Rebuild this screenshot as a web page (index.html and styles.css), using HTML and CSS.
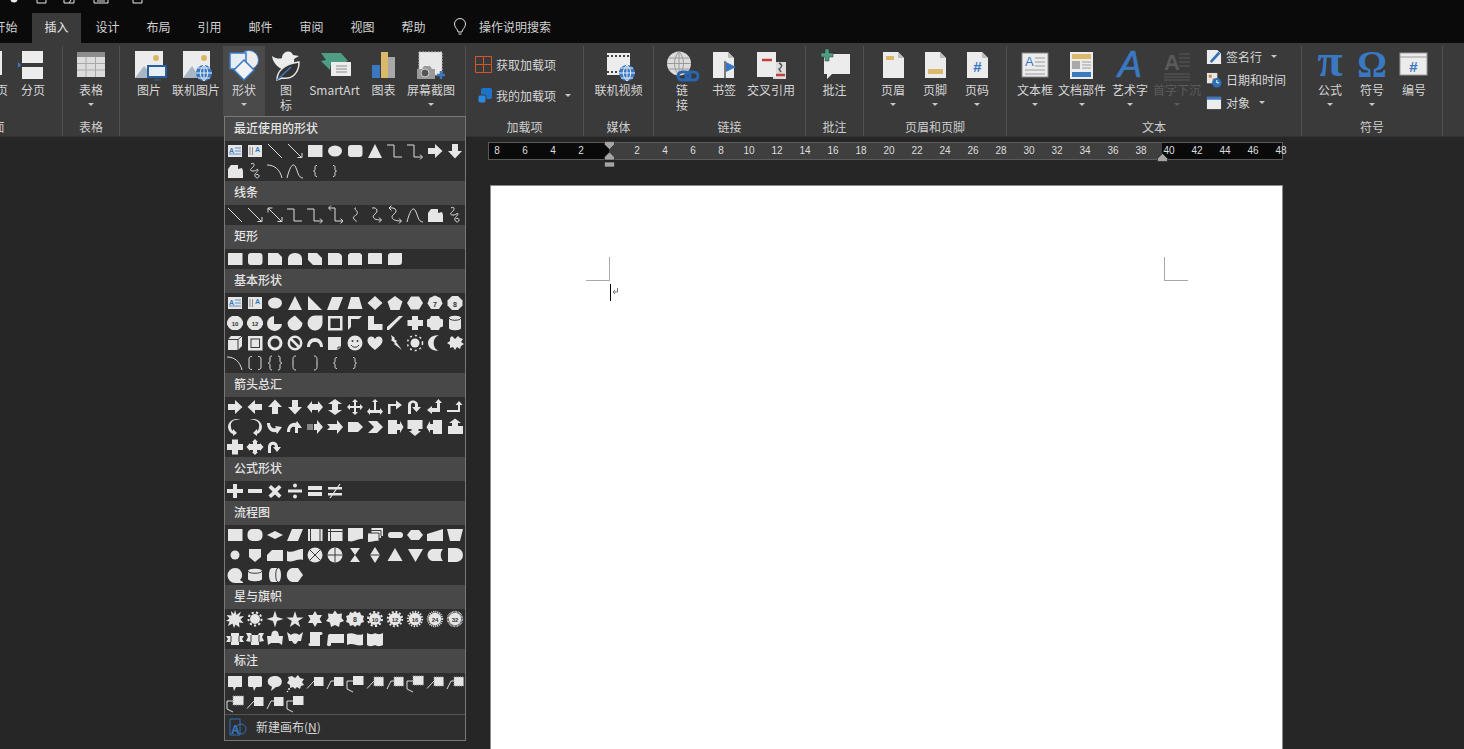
FILE: index.html
```html
<!DOCTYPE html>
<html lang="zh-CN">
<head>
<meta charset="utf-8">
<title>Word 插入</title>
<link rel="stylesheet" href="styles.css">
</head>
<body>
<svg class="defs" aria-hidden="true">
<symbol id="tb" viewBox="0 0 20 20"><rect x="3" y="4" width="14" height="12"/><path class="bl" d="M10 7h6M10 10h6M4 13h12"/></symbol>
<symbol id="tv" viewBox="0 0 20 20"><rect x="3" y="4" width="14" height="12"/><path class="gl" d="M5 6v8M7.500 6v8"/></symbol>
<symbol id="ln" viewBox="0 0 20 20"><path class="st" d="M3 3l14 14"/></symbol>
<symbol id="la" viewBox="0 0 20 20"><path class="st" d="M3 3l14 14M12.500 16.500h4.500v-4.500"/></symbol>
<symbol id="ld" viewBox="0 0 20 20"><path class="st" d="M3 3l14 14M12.500 16.500h4.500v-4.500M3 7.500V3h4.500"/></symbol>
<symbol id="rc" viewBox="0 0 20 20"><rect x="3" y="4" width="14.500" height="12"/></symbol>
<symbol id="el" viewBox="0 0 20 20"><ellipse cx="10" cy="10" rx="7" ry="5.500"/></symbol>
<symbol id="rr" viewBox="0 0 20 20"><rect x="3" y="4" width="14.500" height="12" rx="3"/></symbol>
<symbol id="tri" viewBox="0 0 20 20"><path d="M10 3l7 14H3z"/></symbol>
<symbol id="e1" viewBox="0 0 20 20"><path class="st" d="M2 4h7v12h8"/></symbol>
<symbol id="e2" viewBox="0 0 20 20"><path class="st" d="M2 4h7v12h8M15 13.500l2.500 2.500-2.500 2.500"/></symbol>
<symbol id="e3" viewBox="0 0 20 20"><path class="st" d="M4 3h6v13h8M15.500 13.500l2.500 2.500-2.500 2.500M6 .5L3.500 3 6 5.500"/></symbol>
<symbol id="ra" viewBox="0 0 20 20"><path d="M3 7h7V3l7.500 7-7.500 7v-4H3z"/></symbol>
<symbol id="ka" viewBox="0 0 20 20"><path d="M17 7h-7V3l-7.500 7 7.500 7v-4h7z"/></symbol>
<symbol id="ua" viewBox="0 0 20 20"><path d="M7 17v-7H3l7-7.500 7 7.500h-4v7z"/></symbol>
<symbol id="da" viewBox="0 0 20 20"><path d="M7 3v7H3l7 7.500L17 10h-4V3z"/></symbol>
<symbol id="ff" viewBox="0 0 20 20"><path d="M3 17V8l3-4h7v4l4-1 1 3v7z"/></symbol>
<symbol id="sc" viewBox="0 0 20 20"><path class="st" d="M6 3c3-2 4 1 2 3S4 9 7 10s6-3 6-1-4 3-3 6 4 2 4 0-3-2-3-1"/></symbol>
<symbol id="cu" viewBox="0 0 20 20"><path class="st" d="M2 4c8 0 13 5 15 13"/></symbol>
<symbol id="cs" viewBox="0 0 20 20"><path class="st" d="M2 17C5 5 8 2 10 5c3 5 3 12 8 12"/></symbol>
<symbol id="lb" viewBox="0 0 20 20"><path class="st" d="M12 4.500c-2 0-2 1-2 2v2c0 1-1 1.500-1.500 1.500.5 0 1.500.5 1.500 1.500v2c0 1 0 2 2 2"/></symbol>
<symbol id="rb" viewBox="0 0 20 20"><path class="st" d="M8 4.500c2 0 2 1 2 2v2c0 1 1 1.500 1.500 1.500-.5 0-1.500.5-1.500 1.500v2c0 1 0 2-2 2"/></symbol>
<symbol id="c1" viewBox="0 0 20 20"><path class="st" d="M11 3c-4 0 3 3 1 6s-5 2-3 5 3 2 3 2"/></symbol>
<symbol id="c2" viewBox="0 0 20 20"><path class="st" d="M7 3c6-1 6 4 3 6s-3 6 6 6M14 12.500l2.500 2.500-2.500 2.500"/></symbol>
<symbol id="c3" viewBox="0 0 20 20"><path class="st" d="M4 3c7-1 9 3 5 6s-2 7 7 7M14 13.500l2.500 2.500-2.500 2.500M6.500.5L4 3l2.500 2.500"/></symbol>
<symbol id="s1" viewBox="0 0 20 20"><path d="M3 4h10l4 4v8H3z"/></symbol>
<symbol id="s3" viewBox="0 0 20 20"><path d="M3 16V10C3 6 6 4 10 4s7 2 7 6v6z"/></symbol>
<symbol id="s4" viewBox="0 0 20 20"><path d="M3 4h9l5 5v7H8l-5-5z"/></symbol>
<symbol id="s5" viewBox="0 0 20 20"><path d="M3 16V4h10c2 0 4 2 4 4v8z"/></symbol>
<symbol id="s6" viewBox="0 0 20 20"><path d="M3 6l2-2h10l2 2v10H3z"/></symbol>
<symbol id="s7" viewBox="0 0 20 20"><path d="M3 5c0-1 1-1 1-1h12c1 0 1 1 1 1v10H3z"/></symbol>
<symbol id="s8" viewBox="0 0 20 20"><path d="M6 4h11v9c0 2-1 3-3 3H3V7c0-2 1-3 3-3z"/></symbol>
<symbol id="rt" viewBox="0 0 20 20"><path d="M3 3l14 14H3z"/></symbol>
<symbol id="pg" viewBox="0 0 20 20"><path d="M7 4h11l-5 13H2z"/></symbol>
<symbol id="tz" viewBox="0 0 20 20"><path d="M6 4h8l3.500 12h-15z"/></symbol>
<symbol id="di" viewBox="0 0 20 20"><path d="M10 3l7.500 7-7.500 7-7.500-7z"/></symbol>
<symbol id="pt" viewBox="0 0 20 20"><path d="M10 3l7.500 5.500-3 8.500h-9l-3-8.500z"/></symbol>
<symbol id="hx" viewBox="0 0 20 20"><path d="M6 3.500h8l4 6.500-4 6.500H6L2 10z"/></symbol>
<symbol id="h7" viewBox="0 0 20 20"><path d="M10 2.500l5.500 2.500 2 5.500-3.500 5.500H6l-3.500-5.500 2-5.500z"/></symbol>
<symbol id="o8" viewBox="0 0 20 20"><path d="M7 3h6l4.500 4.500v5L13 17H7l-4.500-4.500v-5z"/></symbol>
<symbol id="d0" viewBox="0 0 20 20"><path d="M7 3h6l3 2 2 3.500v3L16 15l-3 2H7l-3-2-2-3.500v-3L4 5z"/></symbol>
<symbol id="pie" viewBox="0 0 20 20"><path d="M9 3a7.500 7.500 0 1 0 8 8H9z"/></symbol>
<symbol id="tear" viewBox="0 0 20 20"><path d="M10 2.500l7.500 7.500a7.500 7.500 0 1 1-15 0c0-2 3-5 7.500-7.500z"/></symbol>
<symbol id="cho" viewBox="0 0 20 20"><path d="M17.500 2.500v7A7.500 7.500 0 1 1 10 2.500z"/></symbol>
<symbol id="fr" viewBox="0 0 20 20"><path fill-rule="evenodd" d="M3 3h14.500v14.500H3zM5.500 5.500V15H15V5.500z"/></symbol>
<symbol id="hf" viewBox="0 0 20 20"><path d="M3 3h14l-3 3H6v8l-3 3z"/></symbol>
<symbol id="lsh" viewBox="0 0 20 20"><path d="M3 3h6v8h8.500v6H3z"/></symbol>
<symbol id="ds" viewBox="0 0 20 20"><path d="M14 3h4L4 17H2v-3z"/></symbol>
<symbol id="pl" viewBox="0 0 20 20"><path d="M7 3h6v4h5v6h-5v4H7v-4H2.500V7H7z"/></symbol>
<symbol id="pq" viewBox="0 0 20 20"><path d="M6 3h8l1 2.500 3 1v7l-3 1-1 2.500H6l-1-2.500-3-1v-7l3-1z"/></symbol>
<symbol id="can" viewBox="0 0 20 20"><path d="M4 5c0-3 12-3 12 0v10c0 3-12 3-12 0z"/><path class="dk" d="M4 5c0 3 12 3 12 0"/></symbol>
<symbol id="cube" viewBox="0 0 20 20"><path d="M6 3h11v10l-4 4H3V6.500z"/><path class="dk" d="M3 6.500h10V17M13 6.500L17 3"/></symbol>
<symbol id="bev" viewBox="0 0 20 20"><rect x="3" y="3" width="14.500" height="14.500"/><rect class="dkf" x="5.500" y="5.500" width="9.500" height="9.500"/><rect x="6.500" y="6.500" width="7.500" height="7.500"/></symbol>
<symbol id="dn" viewBox="0 0 20 20"><path fill-rule="evenodd" d="M10 2.500a7.500 7.500 0 1 1 0 15 7.500 7.500 0 0 1 0-15zm0 3a4.500 4.500 0 1 0 0 9 4.500 4.500 0 0 0 0-9z"/></symbol>
<symbol id="no" viewBox="0 0 20 20"><circle class="ring" cx="10" cy="10" r="6.200"/><path class="ring" d="M6 6l8 8"/></symbol>
<symbol id="ba" viewBox="0 0 20 20"><path d="M2 14C2 8 6 5 10 5s8 3 8 9h-3c0-3-2-5-5-5s-5 2-5 5z"/></symbol>
<symbol id="fc" viewBox="0 0 20 20"><path d="M3 4h13v10l-3 3H3z"/><path class="dk" d="M16 14h-3v3"/></symbol>
<symbol id="sm" viewBox="0 0 20 20"><circle cx="10" cy="10" r="7.500"/><circle class="dkf" cx="7.500" cy="8" r="1"/><circle class="dkf" cx="12.500" cy="8" r="1"/><path class="dk" d="M6 12c2 3 6 3 8 0"/></symbol>
<symbol id="hr" viewBox="0 0 20 20"><path d="M10 17C5 13 2.500 10.500 2.500 7.500 2.500 3 8 2 10 6c2-4 7.500-3 7.500 1.500 0 3-2.500 5.500-7.500 9.500z"/></symbol>
<symbol id="lt" viewBox="0 0 20 20"><path d="M6 2l4 3-1 1 3 2-1 1 6 8-8-6 1-1-4-3 1-1z"/></symbol>
<symbol id="sun" viewBox="0 0 20 20"><circle cx="10" cy="10" r="4.500"/><circle class="dash" cx="10" cy="10" r="7.500"/></symbol>
<symbol id="mo" viewBox="0 0 20 20"><path d="M14 2.500c-7 1-7 14 0 15C7 18.500 3 14 3 10s4-8.500 11-7.500z"/></symbol>
<symbol id="cl" viewBox="0 0 20 20"><path d="M5 5l2-2 3 3 3-3 2 2 3 1-2 3 3 2-3 2-1 3-3-2-2 3-2-3-3 1v-3l-3-2 3-2z"/></symbol>
<symbol id="bp" viewBox="0 0 20 20"><path class="st" d="M7 3.500C5 3.500 4 4 4 6v8c0 2 1 2.500 3 2.500M13 3.500c2 0 3 .5 3 2.500v8c0 2-1 2.500-3 2.500"/></symbol>
<symbol id="bc" viewBox="0 0 20 20"><path class="st" d="M7 3c-2 0-2 1-2 2v3c0 1-1 2-2 2 1 0 2 1 2 2v3c0 1 0 2 2 2M13 3c2 0 2 1 2 2v3c0 1 1 2 2 2-1 0-2 1-2 2v3c0 1 0 2-2 2"/></symbol>
<symbol id="lk" viewBox="0 0 20 20"><path class="st" d="M11 3C8 3 8 5 8 7v6c0 2 0 4 3 4"/></symbol>
<symbol id="rk" viewBox="0 0 20 20"><path class="st" d="M9 3c3 0 3 2 3 4v6c0 2 0 4-3 4"/></symbol>
<symbol id="lr" viewBox="0 0 20 20"><path d="M2 10l5-6v3h6V4l5 6-5 6v-3H7v3z"/></symbol>
<symbol id="ud" viewBox="0 0 20 20"><path d="M10 2l7 5h-4v6h4l-7 5-7-5h4V7H3z"/></symbol>
<symbol id="qd" viewBox="0 0 20 20"><path d="M10 2l3 3h-2v4h4V7l3 3-3 3v-2h-4v4h2l-3 3-3-3h2v-4H5v2l-3-3 3-3v2h4V5H7z"/></symbol>
<symbol id="tr" viewBox="0 0 20 20"><path d="M10 2l3 3h-2v8h4v-2l3 3.500L15 18v-2H5v2l-3-3.500L5 11v2h4V5H7z"/></symbol>
<symbol id="bt" viewBox="0 0 20 20"><path d="M3 17V7h8V3.500L17 8l-6 4.500V9H5.500v8z"/></symbol>
<symbol id="ut" viewBox="0 0 20 20"><path d="M3 17V8c0-6 10-6 10 0v2h3l-4.500 5L7 10h3V8c0-3-4-3-4 0v9z"/></symbol>
<symbol id="lu" viewBox="0 0 20 20"><path d="M2 13l5-4v2h5V6H10l3.500-4L17 6h-2v9H7v2z"/></symbol>
<symbol id="bu" viewBox="0 0 20 20"><path d="M2 13h11V8h-2.500L14 4l3.500 4H15v7H2z"/></symbol>
<symbol id="cr" viewBox="0 0 20 20"><path d="M14 3C8 2 5 6 6 10c0 2 1 3 2 4v-2l4 4-4 3v-2c-3-1-5-4-5-7C3 5 9 0 15 3z"/></symbol>
<symbol id="cl2" viewBox="0 0 20 20"><path d="M6 3c6-1 9 3 8 7 0 2-1 3-2 4v-2l-4 4 4 3v-2c3-1 5-4 5-7C17 5 11 0 5 3z"/></symbol>
<symbol id="cup" viewBox="0 0 20 20"><path d="M2 6c0 6 4 10 9 9l1 2 5-7-7-1 1 2c-3 1-6-1-6-5z"/></symbol>
<symbol id="cdn" viewBox="0 0 20 20"><path d="M2 15c0-6 4-10 9-9l1-2 5 7-4 0v5h-3v-6c-3-1-5 1-5 5z"/></symbol>
<symbol id="sa" viewBox="0 0 20 20"><path d="M9 7h3V3l6 7-6 7v-4H9z"/><path class="st" d="M3 7v6M5 7v6M7 7v6"/></symbol>
<symbol id="na" viewBox="0 0 20 20"><path d="M2 7h10V3l6 7-6 7v-4H2l3-3z"/></symbol>
<symbol id="hp" viewBox="0 0 20 20"><path d="M3 5h10l5 5-5 5H3z"/></symbol>
<symbol id="ch" viewBox="0 0 20 20"><path d="M3 4h9l6 6-6 6H3l6-6z"/></symbol>
<symbol id="ca" viewBox="0 0 20 20"><path d="M3 3h9v4h3V4l3.500 6-3.500 6v-3h-3v4H3z"/></symbol>
<symbol id="cd" viewBox="0 0 20 20"><path d="M2.500 3h15v9h-4v2h2.500l-6 5-6-5h2.500v-2h-4z"/></symbol>
<symbol id="cb" viewBox="0 0 20 20"><path d="M17 3H8v4H5V4L1.500 10 5 16v-3h3v4h9z"/></symbol>
<symbol id="cp" viewBox="0 0 20 20"><path d="M3 17h15V9h-5V6h3l-6-4.500L4 6h3v3H3z"/></symbol>
<symbol id="cx" viewBox="0 0 20 20"><path d="M7 2.500h6V7h5v6h-5v4.500H7V13H2V7h5z"/></symbol>
<symbol id="cq" viewBox="0 0 20 20"><path d="M10 2l3 3h-1v2h3V6l3.500 4L15 14v-1h-3v2h1l-3 3-3-3h1v-2H5v1l-3.500-4L5 6v1h3V5H7z"/></symbol>
<symbol id="ca2" viewBox="0 0 20 20"><path d="M3 16V10c0-7 10-7 10 0h3l-4 5-4-5h2c0-3-4-3-4 0v6z"/></symbol>
<symbol id="eq1" viewBox="0 0 20 20"><path d="M8 3h4v5h6v4h-6v5H8v-5H2V8h6z"/></symbol>
<symbol id="eq2" viewBox="0 0 20 20"><path d="M3 8h14v4H3z"/></symbol>
<symbol id="eq3" viewBox="0 0 20 20"><path d="M6 4l4 3.500L14 4l2.500 2.500-4 4 4 4-2.500 2.500-4-3.500L6 17l-2.500-2.500 4-4-4-4z"/></symbol>
<symbol id="eq4" viewBox="0 0 20 20"><path d="M3 8.500h14v3H3z"/><circle cx="10" cy="4.500" r="2"/><circle cx="10" cy="15.500" r="2"/></symbol>
<symbol id="eq5" viewBox="0 0 20 20"><path d="M3 5h14v4H3zM3 11h14v4H3z"/></symbol>
<symbol id="eq6" viewBox="0 0 20 20"><path d="M3 6h14v2.500H3zM3 12h14v2.500H3z"/><path class="ring thin" d="M5 17L15 3"/></symbol>
<symbol id="f2" viewBox="0 0 20 20"><rect x="2.500" y="4" width="15" height="12" rx="5"/></symbol>
<symbol id="f3" viewBox="0 0 20 20"><path d="M10 6l8 4-8 4-8-4z"/></symbol>
<symbol id="f4" viewBox="0 0 20 20"><path d="M7 4h11l-5 12H2z"/></symbol>
<symbol id="f5" viewBox="0 0 20 20"><rect x="3" y="4" width="14.500" height="12"/><path class="dk" d="M5.500 4v12M15 4v12"/></symbol>
<symbol id="f6" viewBox="0 0 20 20"><rect x="3" y="4" width="14.500" height="12"/><path class="dk" d="M3 6.500h14.500M5.500 4v12"/></symbol>
<symbol id="f7" viewBox="0 0 20 20"><path d="M3 3h15v11c-5-1-9 4-15 2z"/></symbol>
<symbol id="f8" viewBox="0 0 20 20"><path d="M6 3h12v8h-2v2h-2v3c-4-1-7 1-11 1V8h3z"/><path class="dk" d="M3 8h11v8M6 3v5M6 5.500h10v5.500"/></symbol>
<symbol id="f9" viewBox="0 0 20 20"><rect x="3" y="7" width="15" height="6" rx="3"/></symbol>
<symbol id="f10" viewBox="0 0 20 20"><path d="M6 5h8l4 5-4 5H6l-4-5z"/></symbol>
<symbol id="f11" viewBox="0 0 20 20"><path d="M2 9l16-5v12H2z"/></symbol>
<symbol id="f12" viewBox="0 0 20 20"><path d="M2 4h16l-3 12H5z"/></symbol>
<symbol id="g1" viewBox="0 0 20 20"><circle cx="10" cy="10" r="4.500"/></symbol>
<symbol id="g2" viewBox="0 0 20 20"><path d="M4 4h12v8l-6 5-6-5z"/></symbol>
<symbol id="g3" viewBox="0 0 20 20"><path d="M7 5h11v11H2V10z"/></symbol>
<symbol id="g4" viewBox="0 0 20 20"><path d="M2 6c5 3 11-3 16-2v11c-5-2-11 3-16 1z"/></symbol>
<symbol id="g5" viewBox="0 0 20 20"><circle cx="10" cy="10" r="7.500"/><path class="dk" d="M5 5l10 10M15 5L5 15"/></symbol>
<symbol id="g6" viewBox="0 0 20 20"><circle cx="10" cy="10" r="7.500"/><path class="dk" d="M10 2.500v15M2.500 10h15"/></symbol>
<symbol id="g7" viewBox="0 0 20 20"><path d="M5 3h10l-5 7 5 7H5l5-7z"/></symbol>
<symbol id="g8" viewBox="0 0 20 20"><path d="M10 2l5 8-5 8-5-8z"/><path class="dk" d="M5 10h10"/></symbol>
<symbol id="g9" viewBox="0 0 20 20"><path d="M10 3l7.500 13h-15z"/></symbol>
<symbol id="g10" viewBox="0 0 20 20"><path d="M3 4h15l-7.500 13z"/></symbol>
<symbol id="g11" viewBox="0 0 20 20"><path d="M7 4h11c-3 3-3 9 0 12H7c-6-2-6-10 0-12z"/></symbol>
<symbol id="g12" viewBox="0 0 20 20"><path d="M3 3h8a7 7 0 0 1 0 14H3z"/></symbol>
<symbol id="t1" viewBox="0 0 20 20"><path d="M10 3a7 7 0 0 1 5 12l3 2v1h-8a7.500 7.500 0 0 1 0-15z"/></symbol>
<symbol id="t2" viewBox="0 0 20 20"><path d="M3 6c0-3 14-3 14 0v8c0 3-14 3-14 0z"/><path class="dk" d="M3 6c0 3 14 3 14 0"/></symbol>
<symbol id="t3" viewBox="0 0 20 20"><path d="M7 3h6c4 0 4 14 0 14H7C3 17 3 3 7 3z"/><path class="dk" d="M13 3c-3 0-3 14 0 14"/></symbol>
<symbol id="t4" viewBox="0 0 20 20"><path d="M7 3h6l5 7-5 7H7c-7-2-7-12 0-14z"/></symbol>
<symbol id="x1" viewBox="0 0 20 20"><path d="M10 1l1.500 5L16 2.500 14 7.500l5-.5-3.500 3.500 3 3.500-4.500-.5.500 5-4-3L9 19l-1.500-4.500L3 17l1.500-4.500L1 12l3.500-2.500L1.500 6l5 .5L6 2l3 3z"/></symbol>
<symbol id="x2" viewBox="0 0 20 20"><circle cx="10" cy="10" r="5"/><circle class="saw s10" cx="10" cy="10" r="6.500"/></symbol>
<symbol id="x4" viewBox="0 0 20 20"><path d="M10 1.500L12 8l6.500 2-6.500 2-2 6.500L8 12l-6.500-2L8 8z"/></symbol>
<symbol id="x5" viewBox="0 0 20 20"><path d="M10 2l2 6.500h6.500L13.200 12l2 6L10 14.500 4.800 18l2-6L1.500 8.500H8z"/></symbol>
<symbol id="x6" viewBox="0 0 20 20"><path d="M10 2l7 12H3zM10 18L3 6h14z"/></symbol>
<symbol id="x7" viewBox="0 0 20 20"><path d="M10 1.500l2.500 3.500 4.500-.5-.5 4.500 2.500 3-4 1.500-1 4.500-4-2-4 2-1-4.500-4-1.500 2.500-3-.5-4.500 4.500.5z"/></symbol>
<symbol id="x8" viewBox="0 0 20 20"><path d="M10 2l2 2 3-1 1 3 3 1-1 3 1 3-3 1-1 3-3-1-2 2-2-2-3 1-1-3-3-1 1-3-1-3 3-1 1-3 3 1z"/></symbol>
<symbol id="x10" viewBox="0 0 20 20"><circle cx="10" cy="10" r="6"/><circle class="saw s10" cx="10" cy="10" r="7"/></symbol>
<symbol id="x12" viewBox="0 0 20 20"><circle cx="10" cy="10" r="6.200"/><circle class="saw s12" cx="10" cy="10" r="7.200"/></symbol>
<symbol id="x16" viewBox="0 0 20 20"><circle cx="10" cy="10" r="6.200"/><circle class="saw s16" cx="10" cy="10" r="7.200"/></symbol>
<symbol id="x24" viewBox="0 0 20 20"><circle cx="10" cy="10" r="6.200"/><circle class="saw s24" cx="10" cy="10" r="7.200"/></symbol>
<symbol id="x32" viewBox="0 0 20 20"><circle cx="10" cy="10" r="6.200"/><circle class="saw s32" cx="10" cy="10" r="7.200"/></symbol>
<symbol id="r1" viewBox="0 0 20 20"><path d="M6 4h8v3h5l-2 3 2 3h-5v3H6v-3H1l2-3-2-3h5z"/><path class="dk" d="M6 7v6M14 7v6"/></symbol>
<symbol id="r2" viewBox="0 0 20 20"><path d="M1 4h5l1 2h6l1-2h5l-2 4 2 4-5 1v3H6v-3l-5-1 2-4z"/><path class="dk" d="M6 6v7M14 6v7"/></symbol>
<symbol id="r3" viewBox="0 0 20 20"><path d="M7 3c2-2 4-2 6 0l1 4h4l-1 9-3-2H6l-3 2-1-9h4z"/></symbol>
<symbol id="r4" viewBox="0 0 20 20"><path d="M2 3l4 3c1-2 7-2 8 0l4-3-2 9h-3c-2 4-4 4-6 0H4z"/></symbol>
<symbol id="r5" viewBox="0 0 20 20"><path d="M5 3h11c2 0 2 3 0 3h-1v11H5c-2 0-2-3 0-3z"/></symbol>
<symbol id="r6" viewBox="0 0 20 20"><path d="M3 7c0-2 2-2 2-2h14v9H6v2c0 1-3 2-4 0z"/></symbol>
<symbol id="r7" viewBox="0 0 20 20"><path d="M2 5c6-3 10 3 16 0v11c-6 2-10-3-16 0z"/></symbol>
<symbol id="r8" viewBox="0 0 20 20"><path d="M2 4c4 2 7 1 8 0 2 1 4 2 8 0v12c-4 2-6 1-8 0-2 1-5 2-8 0z"/></symbol>
<symbol id="q1" viewBox="0 0 20 20"><path d="M3 3h14v11h-6l-2 4-1-4H3z"/></symbol>
<symbol id="q2" viewBox="0 0 20 20"><path d="M5 3h10c2 0 2 1 2 2v7c0 1 0 2-2 2h-4l-2 4-1-4H5c-2 0-2-1-2-2V5c0-1 0-2 2-2z"/></symbol>
<symbol id="q3" viewBox="0 0 20 20"><path d="M10 3c9 0 9 11 1 11l-5 4 1-4.500C1 12 1 3 10 3z"/></symbol>
<symbol id="q4" viewBox="0 0 20 20"><path d="M7 3l3 2 3-3 2 3 4 1-2 3 2 3-3 1-1 3-3-2-2 2-2-2-3 1v-3l-3-2 2-3-1-3z"/><circle cx="4" cy="16" r="1"/><circle cx="2.500" cy="18.500" r=".8"/></symbol>
<symbol id="q5" viewBox="0 0 20 20"><rect x="9" y="4" width="9.500" height="9"/><path class="st" d="M9 8l-7 7.500"/></symbol>
<symbol id="q6" viewBox="0 0 20 20"><rect x="9" y="4" width="9.500" height="9"/><path class="st" d="M9 8H6l-4 8"/></symbol>
<symbol id="q7" viewBox="0 0 20 20"><rect x="8" y="3" width="10.500" height="9"/><path class="st" d="M8 8H2v8l6 3"/></symbol>
<symbol id="q8" viewBox="0 0 20 20"><rect class="dotr" x="9" y="4" width="9.500" height="9"/><path class="st" d="M9 8l-7 7.500"/></symbol>
<symbol id="q9" viewBox="0 0 20 20"><rect class="dotr" x="9" y="4" width="9.500" height="9"/><path class="st" d="M9 8H6l-4 8"/></symbol>
<symbol id="q10" viewBox="0 0 20 20"><rect class="dotr" x="8" y="3" width="10.500" height="9"/><path class="st" d="M8 8H2v8l6 3"/></symbol>
</svg>

<div class="titlebar">
  <svg class="tico t-a" viewBox="0 0 8 4"><circle cx="4" cy="-1" r="3.500"/></svg>
  <svg class="tico t-b" viewBox="0 0 11 4"><path class="tl" d="M1 0v3h9V0"/></svg>
  <svg class="tico t-c" viewBox="0 0 12 4"><path class="tl" d="M1 0v3h10V0M8 0L6 3"/></svg>
  <svg class="tico t-d" viewBox="0 0 16 4"><path class="tl" d="M1 0v3h14V0"/><path class="tl" d="M4 1h8"/></svg>
  <svg class="tico t-e" viewBox="0 0 11 4"><path class="tl" d="M1 0v3h9V0"/></svg>
</div>

<nav class="tabs">
  <div class="tab">开始</div>
  <div class="tab active">插入</div>
  <div class="tab">设计</div>
  <div class="tab">布局</div>
  <div class="tab">引用</div>
  <div class="tab">邮件</div>
  <div class="tab">审阅</div>
  <div class="tab">视图</div>
  <div class="tab">帮助</div>
  <svg class="bulb" viewBox="0 0 14 18"><path d="M5 14c0-3-3.500-4-3.500-8a5.500 5.500 0 0 1 11 0c0 4-3.500 5-3.500 8zM5.500 16h3"/></svg>
  <div class="search">操作说明搜索</div>
</nav>

<section class="ribbon">
  <div class="group g0">
    <div class="btns">
      <div class="btn w40"><svg class="ic" viewBox="0 0 34 34"><rect x="3" y="3" width="26" height="24" fill="#ececec"/></svg><span>空白页</span></div>
      <div class="btn w40 ml3"><svg class="ic" viewBox="0 0 34 34"><rect x="6" y="3" width="21" height="12" fill="#ececec"/><rect x="6" y="19" width="21" height="12" fill="#ececec"/><path d="M2 14l3 3-3 3z" fill="#3a78c2"/></svg><span>分页</span></div>
    </div>
    <div class="glabel">页面</div>
  </div>
  <div class="group g1">
    <div class="btns">
      <div class="btn w56"><svg class="ic" viewBox="0 0 34 34"><rect x="3" y="4" width="28" height="25" fill="#dcdcdc"/><rect x="3" y="4" width="28" height="5" fill="#8c8c8c"/><path d="M3 15.500h28M3 22h28M12 9v20M21.500 9v20" stroke="#a8a8a8" fill="none"/></svg><span>表格</span><i class="caret"></i></div>
    </div>
    <div class="glabel">表格</div>
  </div>
  <div class="group g2">
    <div class="btns">
      <div class="btn w44"><svg class="ic" viewBox="0 0 34 34"><rect x="3" y="3" width="28" height="27" fill="#ececec"/><circle cx="24" cy="10" r="3" fill="#d9b56a"/><path d="M3 30l9-12 6 7 2 5z" fill="#a9b7c4"/><rect x="16" y="18" width="18" height="11" fill="#e8eef5" stroke="#2a5f9e" stroke-width="2"/><path d="M22 32h7" stroke="#2a5f9e"/></svg><span>图片</span></div>
      <div class="btn w50"><svg class="ic" viewBox="0 0 34 34"><rect x="4" y="3" width="27" height="27" fill="#ececec"/><circle cx="25" cy="10" r="3" fill="#d9b56a"/><path d="M4 30l9-12 8 12z" fill="#a9b7c4"/><circle cx="25" cy="25" r="8" fill="#3a78c2"/><path d="M17 25h16M25 17v16M19 20h12M19 30h12M25 17c-5 5-5 11 0 16M25 17c5 5 5 11 0 16" stroke="#e8eef5" fill="none"/></svg><span>联机图片</span></div>
      <div class="btn w42 ml2 on"><svg class="ic" viewBox="0 0 34 34"><circle cx="22" cy="12" r="9.500" fill="#ececec" stroke="#3a78c2"/><rect x="3" y="5" width="16" height="16" fill="#e4ecf4" stroke="#3a78c2" stroke-width="1.500"/><path d="M17 12l10 10-10 10L7 22z" fill="#f2f2f2" stroke="#3a78c2" stroke-width="1.500"/></svg><span>形状</span><i class="caret"></i></div>
      <div class="btn w42"><svg class="ic" viewBox="0 0 34 34"><path d="M3 8c4 3 8 3 10 2 0-7 9-9 11-3l6 1-5 3c1 6-3 9-7 11-7 0-14-6-15-14z" fill="#ececec"/><path d="M8 32c0-8 6-16 22-18 0 10-6 18-17 16z" fill="#333" stroke="#e6e6e6" stroke-width="1.500"/><path d="M8 32l14-13" stroke="#3a78c2" stroke-width="1.500"/></svg><span>图<br>标</span></div>
      <div class="btn w55"><svg class="ic" viewBox="0 0 34 34"><path d="M3 5h20l7 8-5 2H13l-1 7-9-9 5-1z" fill="#4d9e85"/><rect x="13" y="14" width="20" height="14" fill="#ececec"/><path d="M18 18h11M18 21h11M18 24h11" stroke="#8c8c8c"/></svg><span>SmartArt</span></div>
      <div class="btn w43"><svg class="ic" viewBox="0 0 34 34"><rect x="5" y="17" width="8" height="13" fill="#3a78c2"/><rect x="14" y="4" width="7" height="26" fill="#dcb86a"/><rect x="21" y="9" width="7" height="21" fill="#a8a8a8"/></svg><span>图表</span></div>
      <div class="btn w52"><svg class="ic" viewBox="0 0 34 34"><rect x="5" y="4" width="23" height="23" fill="#e8e8e8" stroke="#bdbdbd" stroke-dasharray="2 1"/><path d="M3 21h5l2-3h6l2 3h3v10H3z" fill="#9a9a9a"/><circle cx="11" cy="25" r="4" fill="#555" stroke="#d0d0d0"/><path d="M27 23v8M23 27h8" stroke="#3a78c2" stroke-width="2.500"/></svg><span>屏幕截图</span><i class="caret"></i></div>
    </div>
    <div class="glabel"></div>
  </div>
  <div class="group g3">
    <div class="btns rows">
      <div class="row"><svg class="mi" viewBox="0 0 17 17"><path d="M.5.500h16v16H.5zM8.500.5v16M.5 8.500h16" fill="none" stroke="#d4562c"/></svg><span>获取加载项</span></div>
      <div class="row"><svg class="mi" viewBox="0 0 17 17"><rect x="6" y="1" width="11" height="11" rx="2" fill="#1e72c8"/><rect x="3" y="8" width="8" height="8" rx="2" fill="#2b8adf" stroke="#3a3a3a"/></svg><span>我的加载项</span><i class="caret cr"></i></div>
    </div>
    <div class="glabel">加载项</div>
  </div>
  <div class="group g4">
    <div class="btns">
      <div class="btn w69"><svg class="ic" viewBox="0 0 34 34"><rect x="5" y="5" width="23" height="22" fill="#ececec"/><path d="M5 8h23M5 24h23" stroke="#444" stroke-dasharray="2 2" stroke-width="2"/><circle cx="25" cy="25" r="8" fill="#3a78c2"/><path d="M17 25h16M25 17v16M19 20h12M19 30h12M25 17c-5 5-5 11 0 16M25 17c5 5 5 11 0 16" stroke="#e8eef5" fill="none"/></svg><span>联机视频</span></div>
    </div>
    <div class="glabel">媒体</div>
  </div>
  <div class="group g5">
    <div class="btns">
      <div class="btn w38"><svg class="ic" viewBox="0 0 34 34"><circle cx="14" cy="15.500" r="12" fill="#dcdcdc"/><path d="M2 15.500h24M14 3.500v24M4 10h20M4 21h20M14 3.500c-6 7-6 17 0 24M14 3.500c6 7 6 17 0 24" stroke="#9a9a9a" fill="none"/><rect x="13" y="24" width="12" height="8" rx="4" fill="none" stroke="#2a65b0" stroke-width="3"/><rect x="21" y="24" width="12" height="8" rx="4" fill="none" stroke="#2a65b0" stroke-width="3"/></svg><span>链<br>接</span></div>
      <div class="btn w46"><svg class="ic" viewBox="0 0 34 34"><path d="M6 4h15l6 6v20H6z" fill="#ececec"/><path d="M21 4v6h6" fill="#bdbdbd"/><path d="M18 13v17" stroke="#555" stroke-width="1.500"/><path d="M19 14l10 5-10 5z" fill="#3a78c2"/></svg><span>书签</span></div>
      <div class="btn w48"><svg class="ic" viewBox="0 0 34 34"><path d="M19 14h13v17H19z" fill="#dcdcdc"/><path d="M3 4h19v25H3z" fill="#ececec"/><path d="M8 12h10" stroke="#c4403b" stroke-width="2.500"/><path d="M22 27h9" stroke="#c4403b" stroke-width="2.500"/><path d="M25 15c4 2 3 4 0 6l2 3" stroke="#555" stroke-width="1.500" fill="none"/></svg><span>交叉引用</span></div>
    </div>
    <div class="glabel">链接</div>
  </div>
  <div class="group g6">
    <div class="btns">
      <div class="btn w57"><svg class="ic" viewBox="0 0 34 34"><path d="M6 6h26v20H14l-5 5v-5H6z" fill="#ececec"/><path d="M7 1h4v4h4v4h-4v4H7V9H3V5h4z" fill="#4d9e85" stroke="#2e2e2e" stroke-width=".5"/></svg><span>批注</span></div>
    </div>
    <div class="glabel">批注</div>
  </div>
  <div class="group g7">
    <div class="btns">
      <div class="btn w42"><svg class="ic" viewBox="0 0 34 34"><path d="M7 4h15l6 6v20H7z" fill="#ececec"/><path d="M22 4v6h6z" fill="#bdbdbd"/><rect x="10" y="8" width="8" height="4" fill="#dcb86a"/></svg><span>页眉</span><i class="caret"></i></div>
      <div class="btn w42"><svg class="ic" viewBox="0 0 34 34"><path d="M7 4h15l6 6v20H7z" fill="#ececec"/><path d="M22 4v6h6z" fill="#bdbdbd"/><rect x="10" y="21" width="15" height="5" fill="#dcb86a"/></svg><span>页脚</span><i class="caret"></i></div>
      <div class="btn w42"><svg class="ic" viewBox="0 0 34 34"><path d="M7 4h15l6 6v20H7z" fill="#ececec"/><path d="M22 4v6h6z" fill="#bdbdbd"/><text x="17.500" y="24" class="hash">#</text></svg><span>页码</span><i class="caret"></i></div>
    </div>
    <div class="glabel">页眉和页脚</div>
  </div>
  <div class="group g8">
    <div class="btns">
      <div class="btn w46"><svg class="ic" viewBox="0 0 34 34"><rect x="4" y="5" width="26" height="24" fill="#ececec" stroke="#8a8a8a"/><text x="7" y="18" class="big-a">A</text><path d="M17 10h10M17 14h10M17 18h10M7 22h20M7 26h20" stroke="#9a9a9a"/></svg><span>文本框</span><i class="caret"></i></div>
      <div class="btn w48"><svg class="ic" viewBox="0 0 34 34"><rect x="5" y="4" width="23" height="27" fill="#ececec"/><rect x="7" y="6" width="19" height="5" fill="#dcb86a"/><rect x="7" y="13" width="8" height="8" fill="#a8a8a8"/><path d="M17 14h9M17 17h9M17 20h9" stroke="#9a9a9a"/><rect x="7" y="24" width="19" height="5" fill="#3a78c2"/></svg><span>文档部件</span><i class="caret"></i></div>
      <div class="btn w48"><svg class="ic" viewBox="0 0 34 34"><text x="17" y="29" class="wa">A</text></svg><span>艺术字</span><i class="caret"></i></div>
      <div class="btn w46 off"><svg class="ic" viewBox="0 0 34 34"><text x="4" y="22" class="da">A</text><path d="M19 6h11M19 10h11M19 14h11M19 18h11M4 26h26M4 29h26M4 32h26" stroke="#5a5a5a"/></svg><span>首字下沉</span><i class="caret"></i></div>
      <div class="btns smalls">
        <div class="row sr"><svg class="mi sm" viewBox="0 0 17 17"><path d="M1 1h11l4 4v11H1z" fill="#ececec"/><path d="M4 13L13 3l2 2-9 10z" fill="#2f6fb8"/></svg><span>签名行</span><i class="caret cr"></i></div>
        <div class="row sr"><svg class="mi sm" viewBox="0 0 17 17"><rect x="1" y="1" width="11" height="11" fill="#e6e6e6"/><path d="M3 3h3v3H3zM7 7h3v3H7z" fill="#d97f3c"/><circle cx="11.500" cy="11.500" r="5" fill="#2f6fb8"/><path d="M11.500 8.500v3h2.500" stroke="#fff" fill="none"/></svg><span>日期和时间</span></div>
        <div class="row sr"><svg class="mi sm" viewBox="0 0 17 17"><rect x="1" y="2" width="15" height="13" fill="#ececec"/><rect x="1" y="2" width="15" height="3" fill="#3a78c2"/></svg><span>对象</span><i class="caret cr"></i></div>
      </div>
    </div>
    <div class="glabel">文本</div>
  </div>
  <div class="group g9">
    <div class="btns">
      <div class="btn w42"><svg class="ic" viewBox="0 0 34 34"><text x="17" y="28" class="sym pi">π</text></svg><span>公式</span><i class="caret"></i></div>
      <div class="btn w42"><svg class="ic" viewBox="0 0 34 34"><text x="17" y="29" class="sym om">Ω</text></svg><span>符号</span><i class="caret"></i></div>
      <div class="btn w42"><svg class="ic" viewBox="0 0 34 34"><rect x="3" y="5" width="27" height="22" fill="#ececec" stroke="#9a9a9a"/><path d="M3 9h27" stroke="#9a9a9a"/><text x="16.500" y="24" class="hash">#</text></svg><span>编号</span></div>
    </div>
    <div class="glabel">符号</div>
  </div>
</section>

<main class="workspace">
  <div class="ruler">
    <span>8</span><span>6</span><span>4</span><span>2</span><span></span><span>2</span><span>4</span><span>6</span><span>8</span><span>10</span><span>12</span><span>14</span><span>16</span><span>18</span><span>20</span><span>22</span><span>24</span><span>26</span><span>28</span><span>30</span><span>32</span><span>34</span><span>36</span><span>38</span><span>40</span><span>42</span><span>44</span><span>46</span><span>48</span>
    <svg class="marker m-left" viewBox="0 0 11 27"><path d="M.5.500h10v3L5.500 8.500.5 3.500zM5.500 11l5 5v3H.5v-3zM.5 21h10v5H.5z"/></svg>
    <svg class="marker m-right" viewBox="0 0 11 9"><path d="M5.500.5l5 5v3H.5v-3z"/></svg>
  </div>
  <div class="page">
    <div class="crops"><div class="crop tl"></div><div class="crop tr"></div></div>
    <div class="caretline"><i class="cursor"></i><svg class="para" viewBox="0 0 7 8"><path d="M5.500 1v4H1M3 3L1 5l2 2"/></svg></div>
  </div>
</main>

<aside class="menu">
  <div class="mh">最近使用的形状</div>
  <div class="shapes"><svg class="s"><use href="#tb"/><text x="4" y="12" class="ta">A</text></svg><svg class="s"><use href="#tv"/><text x="10" y="11" class="ta">A</text></svg><svg class="s"><use href="#ln"/></svg><svg class="s"><use href="#la"/></svg><svg class="s"><use href="#rc"/></svg><svg class="s"><use href="#el"/></svg><svg class="s"><use href="#rr"/></svg><svg class="s"><use href="#tri"/></svg><svg class="s"><use href="#e1"/></svg><svg class="s"><use href="#e2"/></svg><svg class="s"><use href="#ra"/></svg><svg class="s"><use href="#da"/></svg><svg class="s"><use href="#ff"/></svg><svg class="s"><use href="#sc"/></svg><svg class="s"><use href="#cu"/></svg><svg class="s"><use href="#cs"/></svg><svg class="s"><use href="#lb"/></svg><svg class="s"><use href="#rb"/></svg></div>
  <div class="mh">线条</div>
  <div class="shapes"><svg class="s"><use href="#ln"/></svg><svg class="s"><use href="#la"/></svg><svg class="s"><use href="#ld"/></svg><svg class="s"><use href="#e1"/></svg><svg class="s"><use href="#e2"/></svg><svg class="s"><use href="#e3"/></svg><svg class="s"><use href="#c1"/></svg><svg class="s"><use href="#c2"/></svg><svg class="s"><use href="#c3"/></svg><svg class="s"><use href="#cs"/></svg><svg class="s"><use href="#ff"/></svg><svg class="s"><use href="#sc"/></svg></div>
  <div class="mh">矩形</div>
  <div class="shapes"><svg class="s"><use href="#rc"/></svg><svg class="s"><use href="#rr"/></svg><svg class="s"><use href="#s1"/></svg><svg class="s"><use href="#s3"/></svg><svg class="s"><use href="#s4"/></svg><svg class="s"><use href="#s5"/></svg><svg class="s"><use href="#s6"/></svg><svg class="s"><use href="#s7"/></svg><svg class="s"><use href="#s8"/></svg></div>
  <div class="mh">基本形状</div>
  <div class="shapes"><svg class="s"><use href="#tb"/><text x="4" y="12" class="ta">A</text></svg><svg class="s"><use href="#tv"/><text x="10" y="11" class="ta">A</text></svg><svg class="s"><use href="#el"/></svg><svg class="s"><use href="#tri"/></svg><svg class="s"><use href="#rt"/></svg><svg class="s"><use href="#pg"/></svg><svg class="s"><use href="#tz"/></svg><svg class="s"><use href="#di"/></svg><svg class="s"><use href="#pt"/></svg><svg class="s"><use href="#hx"/></svg><svg class="s"><use href="#h7"/><text x="10" y="13.500" class="dg">7</text></svg><svg class="s"><use href="#o8"/><text x="10" y="13.500" class="dg">8</text></svg><svg class="s"><use href="#d0"/><text x="10" y="12.500" class="dg ds">10</text></svg><svg class="s"><use href="#d0"/><text x="10" y="12.500" class="dg ds">12</text></svg><svg class="s"><use href="#pie"/></svg><svg class="s"><use href="#tear"/></svg><svg class="s"><use href="#cho"/></svg><svg class="s"><use href="#fr"/></svg><svg class="s"><use href="#hf"/></svg><svg class="s"><use href="#lsh"/></svg><svg class="s"><use href="#ds"/></svg><svg class="s"><use href="#pl"/></svg><svg class="s"><use href="#pq"/></svg><svg class="s"><use href="#can"/></svg><svg class="s"><use href="#cube"/></svg><svg class="s"><use href="#bev"/></svg><svg class="s"><use href="#dn"/></svg><svg class="s"><use href="#no"/></svg><svg class="s"><use href="#ba"/></svg><svg class="s"><use href="#fc"/></svg><svg class="s"><use href="#sm"/></svg><svg class="s"><use href="#hr"/></svg><svg class="s"><use href="#lt"/></svg><svg class="s"><use href="#sun"/></svg><svg class="s"><use href="#mo"/></svg><svg class="s"><use href="#cl"/></svg><svg class="s"><use href="#cu"/></svg><svg class="s"><use href="#bp"/></svg><svg class="s"><use href="#bc"/></svg><svg class="s"><use href="#lk"/></svg><svg class="s"><use href="#rk"/></svg><svg class="s"><use href="#lb"/></svg><svg class="s"><use href="#rb"/></svg></div>
  <div class="mh">箭头总汇</div>
  <div class="shapes"><svg class="s"><use href="#ra"/></svg><svg class="s"><use href="#ka"/></svg><svg class="s"><use href="#ua"/></svg><svg class="s"><use href="#da"/></svg><svg class="s"><use href="#lr"/></svg><svg class="s"><use href="#ud"/></svg><svg class="s"><use href="#qd"/></svg><svg class="s"><use href="#tr"/></svg><svg class="s"><use href="#bt"/></svg><svg class="s"><use href="#ut"/></svg><svg class="s"><use href="#lu"/></svg><svg class="s"><use href="#bu"/></svg><svg class="s"><use href="#cr"/></svg><svg class="s"><use href="#cl2"/></svg><svg class="s"><use href="#cup"/></svg><svg class="s"><use href="#cdn"/></svg><svg class="s"><use href="#sa"/></svg><svg class="s"><use href="#na"/></svg><svg class="s"><use href="#hp"/></svg><svg class="s"><use href="#ch"/></svg><svg class="s"><use href="#ca"/></svg><svg class="s"><use href="#cd"/></svg><svg class="s"><use href="#cb"/></svg><svg class="s"><use href="#cp"/></svg><svg class="s"><use href="#cx"/></svg><svg class="s"><use href="#cq"/></svg><svg class="s"><use href="#ca2"/></svg></div>
  <div class="mh">公式形状</div>
  <div class="shapes"><svg class="s"><use href="#eq1"/></svg><svg class="s"><use href="#eq2"/></svg><svg class="s"><use href="#eq3"/></svg><svg class="s"><use href="#eq4"/></svg><svg class="s"><use href="#eq5"/></svg><svg class="s"><use href="#eq6"/></svg></div>
  <div class="mh">流程图</div>
  <div class="shapes"><svg class="s"><use href="#rc"/></svg><svg class="s"><use href="#f2"/></svg><svg class="s"><use href="#f3"/></svg><svg class="s"><use href="#f4"/></svg><svg class="s"><use href="#f5"/></svg><svg class="s"><use href="#f6"/></svg><svg class="s"><use href="#f7"/></svg><svg class="s"><use href="#f8"/></svg><svg class="s"><use href="#f9"/></svg><svg class="s"><use href="#f10"/></svg><svg class="s"><use href="#f11"/></svg><svg class="s"><use href="#f12"/></svg><svg class="s"><use href="#g1"/></svg><svg class="s"><use href="#g2"/></svg><svg class="s"><use href="#g3"/></svg><svg class="s"><use href="#g4"/></svg><svg class="s"><use href="#g5"/></svg><svg class="s"><use href="#g6"/></svg><svg class="s"><use href="#g7"/></svg><svg class="s"><use href="#g8"/></svg><svg class="s"><use href="#g9"/></svg><svg class="s"><use href="#g10"/></svg><svg class="s"><use href="#g11"/></svg><svg class="s"><use href="#g12"/></svg><svg class="s"><use href="#t1"/></svg><svg class="s"><use href="#t2"/></svg><svg class="s"><use href="#t3"/></svg><svg class="s"><use href="#t4"/></svg></div>
  <div class="mh">星与旗帜</div>
  <div class="shapes"><svg class="s"><use href="#x1"/></svg><svg class="s"><use href="#x2"/></svg><svg class="s"><use href="#x4"/></svg><svg class="s"><use href="#x5"/></svg><svg class="s"><use href="#x6"/></svg><svg class="s"><use href="#x7"/></svg><svg class="s"><use href="#x8"/><text x="10" y="13" class="dg">8</text></svg><svg class="s"><use href="#x10"/><text x="10" y="12.500" class="dg ds">10</text></svg><svg class="s"><use href="#x12"/><text x="10" y="12.500" class="dg ds">12</text></svg><svg class="s"><use href="#x16"/><text x="10" y="12.500" class="dg ds">16</text></svg><svg class="s"><use href="#x24"/><text x="10" y="12.500" class="dg ds">24</text></svg><svg class="s"><use href="#x32"/><text x="10" y="12.500" class="dg ds">32</text></svg><svg class="s"><use href="#r1"/></svg><svg class="s"><use href="#r2"/></svg><svg class="s"><use href="#r3"/></svg><svg class="s"><use href="#r4"/></svg><svg class="s"><use href="#r5"/></svg><svg class="s"><use href="#r6"/></svg><svg class="s"><use href="#r7"/></svg><svg class="s"><use href="#r8"/></svg></div>
  <div class="mh">标注</div>
  <div class="shapes"><svg class="s"><use href="#q1"/></svg><svg class="s"><use href="#q2"/></svg><svg class="s"><use href="#q3"/></svg><svg class="s"><use href="#q4"/></svg><svg class="s"><use href="#q5"/></svg><svg class="s"><use href="#q6"/></svg><svg class="s"><use href="#q7"/></svg><svg class="s"><use href="#q8"/></svg><svg class="s"><use href="#q9"/></svg><svg class="s"><use href="#q10"/></svg><svg class="s"><use href="#q8"/></svg><svg class="s"><use href="#q9"/></svg><svg class="s"><use href="#q10"/></svg><svg class="s"><use href="#q5"/></svg><svg class="s"><use href="#q6"/></svg><svg class="s"><use href="#q7"/></svg></div>
  <div class="mfoot"><svg class="canvas" viewBox="0 0 18 18"><path d="M1 1h10v16H1z" fill="none" stroke="#2f6fb8"/><circle cx="12" cy="11" r="5" fill="none" stroke="#2f6fb8"/><text x="2" y="16" class="ca-a">A</text></svg><span>新建画布(<u>N</u>)</span></div>
</aside>
</body>
</html>
```
FILE: styles.css
```css
* { box-sizing: border-box; }
html, body { margin: 0; height: 749px; overflow: hidden; }
body {
  position: relative;
  background: #262626;
  color: #d6d6d6;
  font: 12px/15px "Noto Sans CJK SC", "Noto Sans", sans-serif;
}
.defs { position: absolute; width: 0; height: 0; }

.titlebar { height: 13px; background: #0a0a0a; display: flex; align-items: flex-start; padding-left: 10px; }
.tico { height: 4px; display: block; }
.tl { fill: none; stroke: #e8e8e8; }
.t-a { width: 8px; fill: #e8e8e8; }
.t-b { width: 11px; margin-left: 18px; }
.t-c { width: 12px; margin-left: 16px; }
.t-d { width: 16px; margin-left: 18px; }
.t-e { width: 11px; margin-left: 23px; }

.tabs { height: 30px; background: #0a0a0a; display: flex; align-items: stretch; gap: 2px; margin-left: -19px; width: 1483px; }
.tab { width: 49px; display: flex; align-items: center; justify-content: center; padding-bottom: 3px; color: #d2d2d2; }
.tab.active { background: #3a3a3a; color: #e8e8e8; }
.bulb { width: 14px; height: 18px; align-self: center; margin-left: 13px; margin-bottom: 2px; fill: none; stroke: #e0e0e0; }
.search { align-self: center; margin-left: 10px; margin-bottom: 3px; color: #d2d2d2; }

.ribbon { height: 94px; background: #3a3a3a; border-bottom: 1px solid #333; display: flex; padding-top: 3px; margin-left: -77px; width: 1541px; }
.group { height: 90px; border-right: 1px solid #505050; display: flex; flex-direction: column; flex: 0 0 auto; }
.g0 { width: 140px; }
.g1 { width: 57px; }
.g2 { width: 346px; }
.g3 { width: 118px; }
.g4 { width: 70px; }
.g5 { width: 152px; }
.g6 { width: 58px; }
.g7 { width: 143px; }
.g8 { width: 295px; }
.g9 { width: 141px; }
.btns { height: 73px; display: flex; flex: 0 0 auto; }
.glabel { height: 17px; line-height: 16px; text-align: center; color: #cfcfcf; }
.g0 .btns { padding-left: 47px; }
.g2 .btns { padding-left: 7px; }
.g3 .btns { padding: 3px 0 0 9px; }
.g5 .btns { padding-left: 9px; }
.g7 .btns { padding-left: 8px; }
.g8 > .btns { padding-left: 5px; }
.g9 .btns { padding-left: 7px; }

.btn { flex: 0 0 auto; height: 70px; display: flex; flex-direction: column; align-items: center; padding-top: 2px; text-align: center; white-space: nowrap; color: #d6d6d6; }
.btn.on { background: #4a4a4a; }
.btn.off { color: #5c5c5c; }
.btn.off .caret { border-top-color: #5c5c5c; }
.ic { width: 34px; height: 34px; flex: 0 0 auto; overflow: visible; }
.w38 { width: 38px; } .w40 { width: 40px; } .w42 { width: 42px; } .w43 { width: 43px; }
.w44 { width: 44px; } .w46 { width: 46px; } .w48 { width: 48px; } .w50 { width: 50px; }
.w52 { width: 52px; } .w55 { width: 55px; } .w56 { width: 56px; } .w57 { width: 57px; } .w69 { width: 69px; }
.ml2 { margin-left: 2px; } .ml3 { margin-left: 3px; }
.caret { display: block; width: 0; height: 0; margin-top: 6px; border: 3px solid transparent; border-bottom: 0; border-top-color: #c6c6c6; flex: 0 0 auto; }
.caret.cr { margin: 0 0 0 9px; }

.rows { flex-direction: column; }
.row { height: 31px; display: flex; align-items: center; white-space: nowrap; }
.mi { width: 17px; height: 17px; margin-right: 4px; flex: 0 0 auto; }
.smalls { flex-direction: column; margin: -1px 0 0 6px; height: 69px; }
.row.sr { height: 23px; }
.mi.sm { width: 16px; height: 16px; }

.big-a { font: 13px "Liberation Sans", sans-serif; fill: #3a78c2; }
.wa { font: italic 36px "Liberation Sans", sans-serif; fill: #3a78c2; stroke: #3a78c2; stroke-width: .6; text-anchor: middle; }
.da { font: bold 22px "Liberation Sans", sans-serif; fill: #5a5a5a; }
.hash { font: bold 15px "Liberation Sans", sans-serif; fill: #3a78c2; text-anchor: middle; }
.sym { font-family: "Liberation Serif", serif; font-weight: bold; fill: #3a78c2; text-anchor: middle; }
.sym.pi { font-size: 46px; }
.sym.om { font-size: 37px; }

.workspace { padding: 5px 0 0 488px; }
.ruler {
  position: relative;
  width: 795px; height: 18px;
  border: 1px solid #5a5a5a;
  background: linear-gradient(90deg, #0a0a0a 120px, #3f3f3f 120px, #3f3f3f 673px, #0a0a0a 673px);
  display: flex;
}
.ruler span { flex: 0 0 28px; text-align: center; font: 10px/16px "Liberation Sans", sans-serif; color: #dedede; }
.ruler span:first-child { margin-left: -6px; }
.marker { position: absolute; fill: #a4a4a4; stroke: #1c1c1c; stroke-width: .6; }
.m-left { left: 115px; top: -2px; width: 11px; height: 27px; }
.m-right { left: 668px; top: 10px; width: 11px; height: 9px; }

.page { width: 793px; height: 564px; margin-top: 25px; margin-left: 2px; background: #fff; border: 1px solid #8a8a8a; border-bottom: 0; padding: 71px 94px 0 95px; }
.crops { display: flex; justify-content: space-between; }
.crop { width: 24px; height: 24px; border-bottom: 1px solid #a8a8a8; }
.crop.tl { border-right: 1px solid #a8a8a8; }
.crop.tr { border-left: 1px solid #a8a8a8; }
.caretline { display: flex; padding: 3px 0 0 24px; align-items: flex-start; }
.cursor { display: block; width: 1px; height: 17px; background: #000; }
.para { width: 7px; height: 8px; margin: 3px 0 0 1px; fill: none; stroke: #777; }

.menu { position: absolute; left: 224px; top: 116px; width: 242px; height: 625px; background: #2e2e2e; border: 1px solid #787878; }
.mh { height: 24px; line-height: 22px; padding-left: 9px; background: #484848; color: #e4e4e4; font-weight: 500; font-size: 12px; }
.shapes { display: flex; flex-wrap: wrap; width: 240px; }
.s { width: 20px; height: 20px; fill: #e6e6e6; display: block; }
.st { fill: none; stroke: #dcdcdc; stroke-width: 1; }
.ta { font: bold 7px "Liberation Sans", sans-serif; fill: #3a78c2; }
.bl { fill: none; stroke: #3a78c2; stroke-width: .8; }
.gl { fill: none; stroke: #777; stroke-width: .8; }
.dg { font: bold 7px "Liberation Sans", sans-serif; fill: #333; text-anchor: middle; }
.ds { font-size: 6px; }
.dk { fill: none; stroke: #3a3a3a; stroke-width: 1; }
.dkf { fill: #3a3a3a; }
.ring { fill: none; stroke: #e6e6e6; stroke-width: 2.500; }
.ring.thin { stroke-width: 1.200; }
.dash { fill: none; stroke: #e6e6e6; stroke-width: 1.500; stroke-dasharray: 2 3; }
.saw { fill: none; stroke: #e6e6e6; stroke-width: 2; stroke-dasharray: 1.600 1.600; }
.s10 { stroke-dasharray: 2.200 2.200; }
.s12 { stroke-dasharray: 1.900 1.900; }
.s16 { stroke-dasharray: 1.400 1.400; }
.s24 { stroke-dasharray: 1 1; }
.s32 { stroke-dasharray: .7 .7; }
.dotr { stroke: #9a9a9a; stroke-dasharray: 1 1; }
.mfoot { margin-top: 1px; height: 27px; border-top: 1px solid #555; display: flex; align-items: center; padding: 0 0 3px 4px; color: #d6d6d6; }
.canvas { width: 18px; height: 18px; margin-right: 9px; }
.ca-a { font: bold 12px "Liberation Sans", sans-serif; fill: #3a78c2; }
```
